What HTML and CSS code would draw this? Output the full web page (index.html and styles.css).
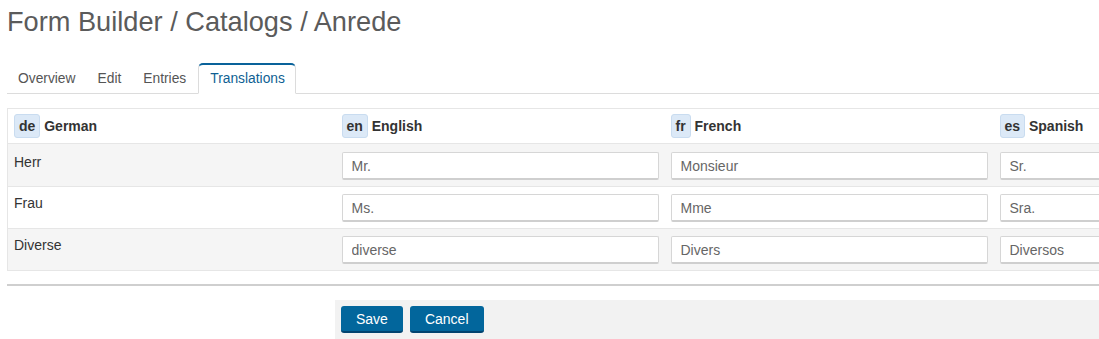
FILE: index.html
```html
<!DOCTYPE html>
<html lang="de">
<head>
<meta charset="utf-8">
<title>Anrede</title>
<link rel="stylesheet" href="styles.css">
</head>
<body>
<div class="page">
  <h1 class="title">Form Builder / Catalogs / Anrede</h1>
  <ul class="tabs">
    <li class="tab">Overview</li>
    <li class="tab">Edit</li>
    <li class="tab">Entries</li>
    <li class="tab tab-active">Translations</li>
  </ul>
  <table class="grid">
    <colgroup>
      <col class="c1"><col class="c"><col class="c"><col class="c">
    </colgroup>
    <thead>
      <tr>
        <th><span class="badge">de</span> German</th>
        <th><span class="badge">en</span> English</th>
        <th><span class="badge">fr</span> French</th>
        <th><span class="badge">es</span> Spanish</th>
      </tr>
    </thead>
    <tbody>
      <tr class="odd first">
        <td>Herr</td>
        <td><input class="field" value="Mr."></td>
        <td><input class="field" value="Monsieur"></td>
        <td><input class="field" value="Sr."></td>
      </tr>
      <tr>
        <td>Frau</td>
        <td><input class="field" value="Ms."></td>
        <td><input class="field" value="Mme"></td>
        <td><input class="field" value="Sra."></td>
      </tr>
      <tr class="odd">
        <td>Diverse</td>
        <td><input class="field" value="diverse"></td>
        <td><input class="field" value="Divers"></td>
        <td><input class="field" value="Diversos"></td>
      </tr>
    </tbody>
  </table>
  <hr class="rule">
  <div class="actions">
    <button class="btn">Save</button>
    <button class="btn">Cancel</button>
  </div>
</div>
</body>
</html>
```

FILE: styles.css
```css
html, body {
  margin: 0;
  padding: 0;
  overflow: hidden;
  background: #fff;
}
body {
  font-family: "Liberation Sans", Arial, sans-serif;
  font-size: 14px;
  line-height: 20px;
  color: #333;
}
.page {
  padding: 0 0 0 7px;
  width: 1400px;
}
.title {
  margin: 0;
  padding-top: 5px;
  font-size: 27.2px;
  line-height: 34px;
  font-weight: normal;
  color: #5b5b5b;
}
.tabs {
  list-style: none;
  margin: 24px 0 0 0;
  padding: 0;
  display: flex;
  border-bottom: 1px solid #dcdcdc;
  width: 1092px;
}
.tab {
  padding: 4px 10px 4px 10px;
  margin: 0 0 -1px 0;
  border: 1px solid transparent;
  border-top-width: 2px;
  color: #555;
  font-size: 13.8px;
}
.tab-active {
  margin-left: 1px;
  padding-left: 11px;
  padding-right: 10px;
  background: #fff;
  border-color: #dcdcdc;
  border-top-color: #09629a;
  border-bottom-color: #fff;
  border-radius: 5px 5px 0 0;
  color: #0f5f93;
}
.grid {
  margin-top: 14px;
  border-collapse: collapse;
  table-layout: fixed;
  width: 1316px;
  border: 1px solid #e6e6e6;
}
.c1 { width: 328px; }
.c { width: 329px; }
.grid th {
  text-align: left;
  font-weight: bold;
  padding: 5px 6px 5px 6px;
  color: #333;
  background: #fff;
  border-bottom: 1px solid #e6e6e6;
}
.grid td {
  padding: 7px 6px 6px 6px;
  vertical-align: top;
  border-bottom: 1px solid #e6e6e6;
}
.grid tr.first td {
  padding-top: 8px;
}
.grid tr.odd td {
  background: #f5f5f5;
}
.grid tbody tr:last-child td {
  border-bottom: 0;
}
.grid td:first-child {
  padding-top: 6px;
}
.badge {
  display: inline-block;
  padding: 1px 4px;
  margin-right: 0;
  background: #dce9f7;
  border: 1px solid #c9dcf0;
  border-radius: 3px;
  color: #333;
}
.field {
  box-sizing: border-box;
  display: block;
  width: 317px;
  height: 28px;
  margin: 0;
  padding: 3px 9px;
  font-family: "Liberation Sans", Arial, sans-serif;
  font-size: 14px;
  color: #666;
  background: #fff;
  border: 1px solid #d6d6d6;
  border-bottom: 2px solid #cfcfcf;
  border-radius: 2px;
}
.rule {
  margin: 13px 0 0 0;
  border: 0;
  border-top: 2px solid #cfcfcf;
  width: 1092px;
}
.actions {
  margin: 14px 0 0 328px;
  padding: 6px 6px 6px 6px;
  background: #f2f2f2;
  height: 40px;
  display: flex;
  gap: 7px;
  align-items: flex-start;
}
.btn {
  font-family: "Liberation Sans", Arial, sans-serif;
  font-size: 14px;
  line-height: 18px;
  color: #fff;
  background: #02669c;
  border: 0;
  border-bottom: 2px solid #024470;
  border-radius: 3px;
  padding: 4px 15px 3px 15px;
  margin: 0;
}
```
